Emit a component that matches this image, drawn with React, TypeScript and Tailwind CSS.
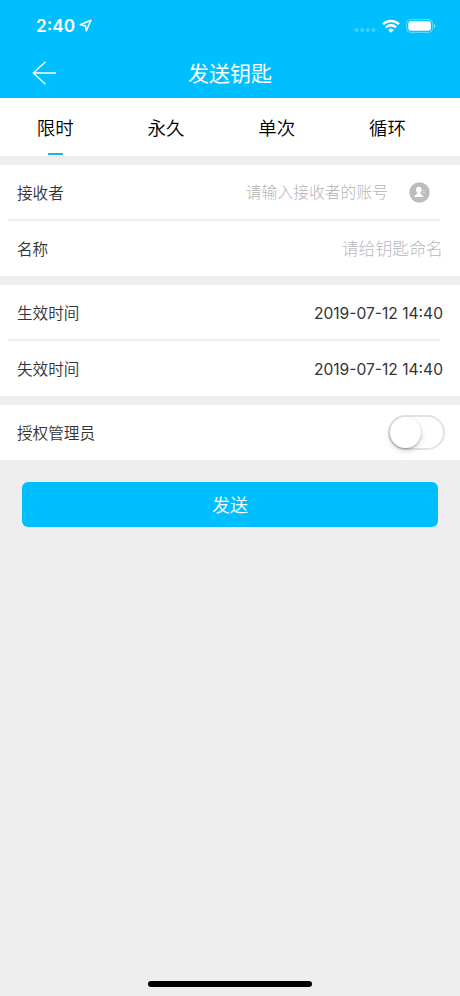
import { useState, type ReactNode } from "react";

const TABS = ["限时", "永久", "单次", "循环"];

export default function App() {
  const [tab, setTab] = useState(0);
  const [isAdmin, setIsAdmin] = useState(false);

  return (
    <div className="relative flex h-[996px] w-[460px] flex-col overflow-hidden bg-[#eeeeee] font-['Inter','Noto_Sans_CJK_SC',sans-serif] text-[#333333]">
      <header className="h-[98px] bg-[#00bfff] text-white">
        <StatusBar />
        <div className="grid h-[44px] grid-cols-[1fr_auto_1fr] items-center">
          <button type="button" aria-label="返回" className="ml-8 w-6">
            <BackArrow />
          </button>
          <h1 className="pt-0.5 text-[21px] leading-[30px] font-normal">发送钥匙</h1>
        </div>
      </header>

      <nav className="flex h-[58px] bg-white pr-[17px]">
        {TABS.map((label, i) => (
          <button
            key={label}
            type="button"
            onClick={() => setTab(i)}
            className="flex flex-1 flex-col items-center justify-between pt-4 pb-px text-[18.5px] leading-7 font-[350] text-black"
          >
            {label}
            <span className={i === tab ? "h-0.5 w-[15px] bg-[#1cb4e8]" : "h-0.5 w-[15px]"} />
          </button>
        ))}
      </nav>

      <Group>
        <Row label="接收者">
          <span className="pt-px text-[15.8px] font-light text-[#b4b4b4]">请输入接收者的账号</span>
          <ContactIcon />
        </Row>
        <Divider />
        <Row label="名称">
          <span className="pt-0.5 text-[16.9px] font-light text-[#b8b8bd]">请给钥匙命名</span>
        </Row>
      </Group>

      <Group>
        <Row label="生效时间">
          <span className="pt-0.5 text-[15.6px]">2019-07-12 14:40</span>
        </Row>
        <Divider />
        <Row label="失效时间">
          <span className="pt-0.5 text-[15.6px]">2019-07-12 14:40</span>
        </Row>
      </Group>

      <Group>
        <Row label="授权管理员">
          <Toggle checked={isAdmin} onChange={setIsAdmin} />
        </Row>
      </Group>

      <button
        type="button"
        className="mx-[22px] mt-[22px] h-[45px] shrink-0 rounded-md bg-[#00bfff] pt-0.5 text-[18px] font-[350] text-white"
      >
        发送
      </button>

      {/* Home indicator */}
      <div className="mx-auto mt-auto mb-[9px] h-[6px] w-[164px] rounded-full bg-black" />
    </div>
  );
}

function Group({ children }: { children: ReactNode }) {
  return <section className="mt-[9px] bg-white">{children}</section>;
}

function Row({ label, children }: { label: string; children: ReactNode }) {
  return (
    <div className="flex h-[55px] items-center justify-between px-[17px]">
      <span className="pt-0.5 text-[15.6px] font-[350]">{label}</span>
      <div className="flex items-center">{children}</div>
    </div>
  );
}

function Divider() {
  return <div className="-mt-px mr-5 ml-2 h-[2px] bg-[#eeeeee]" />;
}

function Toggle({ checked, onChange }: { checked: boolean; onChange: (v: boolean) => void }) {
  return (
    <button
      type="button"
      role="switch"
      aria-checked={checked}
      onClick={() => onChange(!checked)}
      className="-mr-[2px] flex h-[35px] w-[57px] items-center rounded-full border-2 border-[#e2e2e2] bg-white"
    >
      <span
        className={
          checked
            ? "ml-auto h-[31px] w-[31px] rounded-full bg-white shadow-[0_3px_6px_rgba(0,0,0,0.15),0_1px_2px_rgba(0,0,0,0.25)]"
            : "h-[31px] w-[31px] rounded-full bg-white shadow-[0_3px_6px_rgba(0,0,0,0.15),0_1px_2px_rgba(0,0,0,0.25)]"
        }
      />
    </button>
  );
}

function StatusBar() {
  return (
    <div className="flex h-[51px] items-center justify-between pr-6 pl-9">
      <div className="flex items-center gap-1">
        <span className="text-[17.2px] leading-6 font-semibold">2:40</span>
        <svg width="13" height="13" viewBox="0 0 13 13" fill="none" stroke="currentColor">
          <path d="M11.8 1.2 1.3 5.7l4.9 1.1 1.2 4.9z" strokeWidth="1.6" strokeLinejoin="round" />
        </svg>
      </div>
      <div className="flex items-center">
        <svg width="22" height="18" viewBox="0 0 22 18" fill="currentColor" opacity="0.25">
          <circle cx="2.5" cy="13" r="2" />
          <circle cx="8.2" cy="13" r="2" />
          <circle cx="13.8" cy="13" r="2" />
          <circle cx="19.5" cy="13" r="2" />
        </svg>
        <svg className="ml-1.5" width="18" height="14" viewBox="0 0 18 14" fill="none">
          <path d="M1 5.2a11.4 11.4 0 0 1 16 0" stroke="currentColor" strokeWidth="2.5" />
          <path d="M3.9 8.4a7.3 7.3 0 0 1 10.2 0" stroke="currentColor" strokeWidth="2.4" />
          <path d="M9 13.7 6.2 10.9a4 4 0 0 1 5.6 0z" fill="currentColor" />
        </svg>
        <svg className="ml-1.5" width="30" height="14" viewBox="0 0 30 14" fill="none">
          <rect x="0.6" y="0.6" width="26" height="12.8" rx="4" stroke="currentColor" strokeOpacity="0.4" />
          <rect x="2.3" y="2.3" width="22.6" height="9.4" rx="2.4" fill="currentColor" />
          <path d="M27.9 4.8c2 .8 2 3.6 0 4.4z" fill="currentColor" fillOpacity="0.5" />
        </svg>
      </div>
    </div>
  );
}

function BackArrow() {
  return (
    <svg width="24" height="24" viewBox="0 0 24 24" fill="none" stroke="currentColor" strokeWidth="1.3">
      <path d="M13.5.8 1.3 12l12.2 11.2M1.3 12H24" />
    </svg>
  );
}

function ContactIcon() {
  return (
    <svg className="mr-[13px] ml-[21px]" width="21" height="21" viewBox="0 0 21 21">
      <circle cx="10.5" cy="10.5" r="10.2" fill="#bdbdbd" />
      <path
        fill="#ffffff"
        d="M9.8 4.8c1.8 0 2.9 1.2 2.9 3 0 1.5-.6 2.3-1.3 3v.9c.3.9 3 1.1 3.2 3.2H5.1c.2-2.1 2.9-2.3 3.2-3.2v-.9c-.7-.7-1.3-1.5-1.3-3 0-1.8 1.1-3 2.8-3z"
      />
      <path stroke="#ffffff" strokeOpacity="0.6" strokeWidth="0.9" d="M13.7 8.5h2.3M13.7 10.7h2.3" />
    </svg>
  );
}
